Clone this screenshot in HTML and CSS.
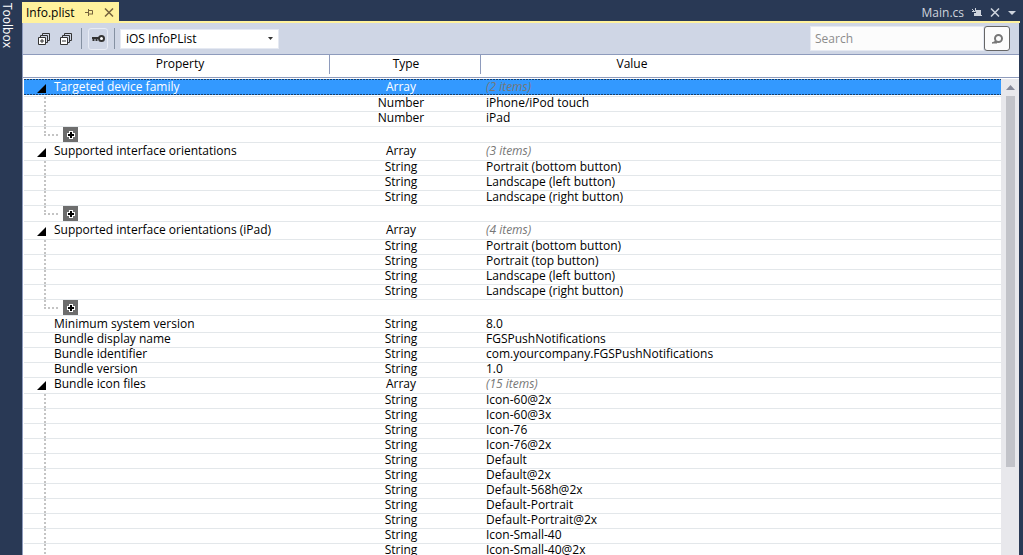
FILE: index.html
```
<!DOCTYPE html>
<html lang="en">
<head>
    <meta charset="UTF-8">
    <meta name="viewport" content="width=device-width, initial-scale=1.0">
    <title>Info.plist</title>
    <link rel="stylesheet" href="styles.css">
</head>
<body>

    <aside class="rail">
        <button type="button" class="rail-button">Toolbox</button>
    </aside>

    <main class="workspace">
        <!-- Document tabs -->
        <nav class="tabs">
            <div class="tab active">
                <a href="#info">Info.plist</a>
                <button type="button" class="tab-button" aria-label="Pin">
                    <svg width="9" height="9" viewBox="0 0 9 9"><path d="M0 4.5H3M3.5 1V8M4 2.5H7.5V6M4 6H8" fill="none" stroke="#75633d"/></svg>
                </button>
                <button type="button" class="tab-button" aria-label="Close">
                    <svg width="10" height="9" viewBox="0 0 10 9"><path d="M1 .5L9 8.5M9 .5L1 8.5" fill="none" stroke="#75633d" stroke-width="1.5"/></svg>
                </button>
            </div>
            <div class="tab preview">
                <a href="#main">Main.cs</a>
                <button type="button" class="tab-button" aria-label="Keep open">
                    <svg width="10" height="9" viewBox="0 0 10 9"><path d="M4 2H9V7H10V8H2V5H4Z" fill="#ced4dd"/><path d="M0 1L3 4M0 3.5H3.5V0" fill="none" stroke="#ced4dd"/></svg>
                </button>
                <button type="button" class="tab-button" aria-label="Close">
                    <svg width="10" height="9" viewBox="0 0 10 9"><path d="M1 .5L9 8.5M9 .5L1 8.5" fill="none" stroke="#ced4dd" stroke-width="1.5"/></svg>
                </button>
                <button type="button" class="tab-button" aria-label="Open documents">
                    <svg width="8" height="4" viewBox="0 0 8 4"><path d="M0 0H8L4 4Z" fill="#ced4dd"/></svg>
                </button>
            </div>
        </nav>

        <section class="editor">
            <!-- Toolbar -->
            <div class="toolbar">
                <div class="tool-group">
                    <button type="button" class="tool" aria-label="Expand all">
                        <svg width="12" height="12" viewBox="0 0 12 12"><g fill="none" stroke="#333"><path d="M4.5 2V.5H11.5V7.5H10M2.5 4V2.5H9.5V9.5H8"/><path d="M.5 4.5H7.5V11.5H.5ZM2 8H6M4 6V10" fill="#fff"/></g></svg>
                    </button>
                    <button type="button" class="tool" aria-label="Collapse all">
                        <svg width="12" height="12" viewBox="0 0 12 12"><g fill="none" stroke="#333"><path d="M4.5 2V.5H11.5V7.5H10M2.5 4V2.5H9.5V9.5H8"/><path d="M.5 4.5H7.5V11.5H.5ZM2 8H6" fill="#fff"/></g></svg>
                    </button>
                </div>
                <div class="tool-group">
                    <button type="button" class="tool pressed" aria-label="Show keys">
                        <svg width="13" height="7" viewBox="0 0 13 7"><path d="M0 3H8M1.5 3V6M4.5 3V6" fill="none" stroke="#333" stroke-width="2"/><circle cx="9.5" cy="3.5" r="2.5" fill="#fff" stroke="#333" stroke-width="2"/></svg>
                    </button>
                </div>
                <div class="schema">
                    <select aria-label="Schema">
                        <option>iOS InfoPList</option>
                    </select>
                    <svg width="5" height="3" viewBox="0 0 5 3"><path d="M0 0H5L2.5 3Z" fill="#333"/></svg>
                </div>
                <form class="search">
                    <input type="text" placeholder="Search" aria-label="Search">
                    <button type="button" aria-label="Search">
                        <svg width="11" height="10" viewBox="0 0 11 10"><circle cx="6.5" cy="4.5" r="3.5" fill="none" stroke="#777" stroke-width="2"/><path d="M0 9L4 7L5 9Z" fill="#777" stroke="#777"/></svg>
                    </button>
                </form>
            </div>

            <!-- Column headings -->
            <div class="headings">
                <div class="heading col-property">Property</div>
                <div class="heading col-type">Type</div>
                <div class="heading col-value">Value</div>
            </div>

            <!-- Properties -->
            <div class="content">
                <table class="plist" aria-label="Properties">
                    <colgroup>
                        <col class="first">
                        <col class="second">
                        <col>
                    </colgroup>
                    <tbody>
                        <tr class="group selected"><td><button type="button" class="toggle" aria-label="Collapse"></button>Targeted device family</td><td>Array</td><td><i>(2 items)</i></td></tr>
                        <tr class="child"><td></td><td>Number</td><td>iPhone/iPod touch</td></tr>
                        <tr class="child"><td></td><td>Number</td><td>iPad</td></tr>
                        <tr class="add"><td><button type="button" class="plus" aria-label="Add item"><svg width="8" height="8" viewBox="0 0 8 8"><path d="M2 0H6V2H8V6H6V8H2V6H0V2H2Z" fill="#fff"/><path d="M4 1V7M1 4H7" stroke="#000" stroke-width="2"/></svg></button></td><td></td><td></td></tr>

                        <tr class="group"><td><button type="button" class="toggle" aria-label="Collapse"></button>Supported interface orientations</td><td>Array</td><td><i>(3 items)</i></td></tr>
                        <tr class="child"><td></td><td>String</td><td>Portrait (bottom button)</td></tr>
                        <tr class="child"><td></td><td>String</td><td>Landscape (left button)</td></tr>
                        <tr class="child"><td></td><td>String</td><td>Landscape (right button)</td></tr>
                        <tr class="add"><td><button type="button" class="plus" aria-label="Add item"><svg width="8" height="8" viewBox="0 0 8 8"><path d="M2 0H6V2H8V6H6V8H2V6H0V2H2Z" fill="#fff"/><path d="M4 1V7M1 4H7" stroke="#000" stroke-width="2"/></svg></button></td><td></td><td></td></tr>

                        <tr class="group"><td><button type="button" class="toggle" aria-label="Collapse"></button>Supported interface orientations (iPad)</td><td>Array</td><td><i>(4 items)</i></td></tr>
                        <tr class="child"><td></td><td>String</td><td>Portrait (bottom button)</td></tr>
                        <tr class="child"><td></td><td>String</td><td>Portrait (top button)</td></tr>
                        <tr class="child"><td></td><td>String</td><td>Landscape (left button)</td></tr>
                        <tr class="child"><td></td><td>String</td><td>Landscape (right button)</td></tr>
                        <tr class="add"><td><button type="button" class="plus" aria-label="Add item"><svg width="8" height="8" viewBox="0 0 8 8"><path d="M2 0H6V2H8V6H6V8H2V6H0V2H2Z" fill="#fff"/><path d="M4 1V7M1 4H7" stroke="#000" stroke-width="2"/></svg></button></td><td></td><td></td></tr>

                        <tr class="spaced"><td>Minimum system version</td><td>String</td><td>8.0</td></tr>
                        <tr><td>Bundle display name</td><td>String</td><td>FGSPushNotifications</td></tr>
                        <tr><td>Bundle identifier</td><td>String</td><td>com.yourcompany.FGSPushNotifications</td></tr>
                        <tr><td>Bundle version</td><td>String</td><td>1.0</td></tr>

                        <tr class="group compact"><td><button type="button" class="toggle" aria-label="Collapse"></button>Bundle icon files</td><td>Array</td><td><i>(15 items)</i></td></tr>
                        <tr class="child"><td></td><td>String</td><td>Icon-60@2x</td></tr>
                        <tr class="child"><td></td><td>String</td><td>Icon-60@3x</td></tr>
                        <tr class="child"><td></td><td>String</td><td>Icon-76</td></tr>
                        <tr class="child"><td></td><td>String</td><td>Icon-76@2x</td></tr>
                        <tr class="child"><td></td><td>String</td><td>Default</td></tr>
                        <tr class="child"><td></td><td>String</td><td>Default@2x</td></tr>
                        <tr class="child"><td></td><td>String</td><td>Default-568h@2x</td></tr>
                        <tr class="child"><td></td><td>String</td><td>Default-Portrait</td></tr>
                        <tr class="child"><td></td><td>String</td><td>Default-Portrait@2x</td></tr>
                        <tr class="child"><td></td><td>String</td><td>Icon-Small-40</td></tr>
                        <tr class="child"><td></td><td>String</td><td>Icon-Small-40@2x</td></tr>
                    </tbody>
                </table>
                <div class="scrollbar">
                    <svg width="9" height="5" viewBox="0 0 9 5"><path d="M0 5H9L4.5 0Z" fill="#868999"/></svg>
                    <div class="thumb"></div>
                </div>
            </div>
        </section>
    </main>

</body>
</html>
```
FILE: styles.css
```
* {
    box-sizing: border-box;
}
body {
    margin: 0;
    height: 100vh;
    display: flex;
    overflow: hidden;
    background-color: #293955;
    color: #000;
    font-family: "Segoe UI", "Open Sans", sans-serif;
    font-size: 12px;
    line-height: 14px;
}
button, input, select {
    font: inherit;
    color: inherit;
}
button {
    padding: 0;
    border: none;
    background: none;
    cursor: pointer;
}
svg {
    display: block;
}
a {
    color: inherit;
    text-decoration: none;
}

/* Left rail */
.rail {
    width: 22px;
    flex: none;
    padding-top: 3px;
}
.rail-button {
    writing-mode: vertical-rl;
    color: #fff;
    line-height: 14px;
}
.workspace {
    flex: 1;
    min-width: 0;
    display: flex;
    flex-direction: column;
    padding-right: 3px;
}

/* Tabs */
.tabs {
    display: flex;
    justify-content: space-between;
    padding-top: 2px;
    border-bottom: 2px solid #fff29d;
}
.tab {
    display: flex;
    align-items: center;
    height: 19px;
    padding: 2px 4px 0;
    gap: 10px;
}
.tab.active {
    background-color: #fff29d;
    padding-right: 5px;
}
.tab.preview {
    color: #ced4dd;
    gap: 8px;
}

/* Toolbar */
.editor {
    flex: 1;
    min-height: 0;
    display: flex;
    flex-direction: column;
    margin-right: 1px;
    border-left: 1px solid #8e9bbc;
    background-color: #fff;
}
.toolbar {
    display: flex;
    align-items: center;
    height: 32px;
    padding: 0 9px 0 15px;
    border-bottom: 1px solid #8e9bbc;
    background-color: #cfd6e5;
}
.tool-group {
    display: flex;
    align-items: center;
    gap: 10px;
    height: 21px;
    padding-right: 9px;
    margin-right: 6px;
    border-right: 1px solid #8591a2;
}
.tool-group + .tool-group {
    padding-right: 6px;
    margin-right: 5px;
}
.tool.pressed {
    display: grid;
    place-items: center;
    width: 20px;
    height: 22px;
    border: 1px solid #e8ecf5;
    border-radius: 3px;
}
.schema {
    position: relative;
    width: 159px;
}
.schema select {
    appearance: none;
    display: block;
    width: 100%;
    height: 20px;
    padding: 0 5px;
    border: 1px solid #e5e9f2;
    background-color: #fff;
}
.schema svg {
    position: absolute;
    top: 8px;
    right: 6px;
    pointer-events: none;
}
.search {
    display: flex;
    margin-left: auto;
    height: 25px;
}
.search input {
    width: 174px;
    padding: 0 4px;
    border: 1px solid #e5e9f2;
    background-color: #fcfcfc;
}
.search input::placeholder {
    color: #8c8c8c;
}
.search button {
    display: grid;
    place-items: center;
    width: 26px;
    border: 1px solid #666;
    border-radius: 3px;
    background-color: #fcfcfc;
}

/* Column headings */
.headings {
    display: flex;
    height: 23px;
    padding-bottom: 3px;
    border-bottom: 1px solid #8e9bbc;
}
.heading {
    text-align: center;
    line-height: 18px;
    border-right: 1px solid #8e9bbc;
}
.col-property {
    width: 307px;
    padding-left: 8px;
}
.col-type {
    width: 151px;
    padding-left: 2px;
}
.col-value {
    width: 302px;
    border-right: none;
}

/* Property table */
.content {
    flex: 1;
    min-height: 0;
    display: flex;
    overflow: hidden;
    padding: 1px 0 0 1px;
}
.plist {
    flex: 1;
    align-self: flex-start;
    table-layout: fixed;
    border-spacing: 0;
    line-height: 12px;
}
.plist .first {
    width: 306px;
}
.plist .second {
    width: 151px;
}
.plist td {
    height: 15px;
    padding: 0 0 0 5px;
    border-bottom: 1px solid #e3e7ea;
    vertical-align: top;
    white-space: nowrap;
}
.plist td:first-child {
    padding-left: 30px;
}
.plist td:nth-child(2) {
    padding: 0 9px 0 0;
    text-align: center;
}
.plist i {
    color: #777;
}
.plist .group td {
    height: 18px;
    padding-top: 2px;
}
.plist .spaced td {
    height: 17px;
    padding-top: 2px;
}
.plist .group.compact td {
    height: 16px;
    padding-top: 0;
}
.plist .group td:first-child {
    padding-left: 13px;
}
.toggle {
    width: 9px;
    height: 9px;
    margin-right: 8px;
    vertical-align: -2px;
    background-color: #000;
    clip-path: polygon(100% 0, 100% 100%, 0 100%);
}
.selected td {
    color: #fff;
    background-image:
        repeating-linear-gradient(to right, #16406e 0 2px, #3399ff 2px 3px),
        repeating-linear-gradient(to right, #16406e 0 2px, #3399ff 2px 3px),
        linear-gradient(#3399ff, #3399ff);
    background-size: 100% 1px, 100% 1px, 100% 16px;
    background-position: 0 0, 0 15px, 0 0;
    background-repeat: no-repeat;
}

/* Dotted tree lines */
.child td:first-child {
    background: repeating-linear-gradient(#c4c4c4 0 2px, transparent 2px 4px) 20px 0 / 2px 100% no-repeat;
}
.plist .add td {
    height: 16px;
    padding-top: 0;
}
.plist .add td:first-child {
    padding-left: 39px;
    background-image:
        repeating-linear-gradient(#c4c4c4 0 2px, transparent 2px 4px),
        repeating-linear-gradient(to right, #c4c4c4 0 2px, transparent 2px 4px);
    background-size: 2px 8px, 14px 2px;
    background-position: 20px 0, 20px 7px;
    background-repeat: no-repeat;
}
.plus {
    display: grid;
    place-items: center;
    width: 15px;
    height: 15px;
    padding: 1px 0 0 1px;
    background-color: #6d6d6d;
}

/* Scrollbar */
.scrollbar {
    display: flex;
    flex-direction: column;
    align-items: center;
    gap: 6px;
    width: 18px;
    padding-top: 6px;
    background-color: #e8e8ec;
}
.thumb {
    width: 9px;
    height: 79%;
    background-color: #c2c3c9;
}
```
